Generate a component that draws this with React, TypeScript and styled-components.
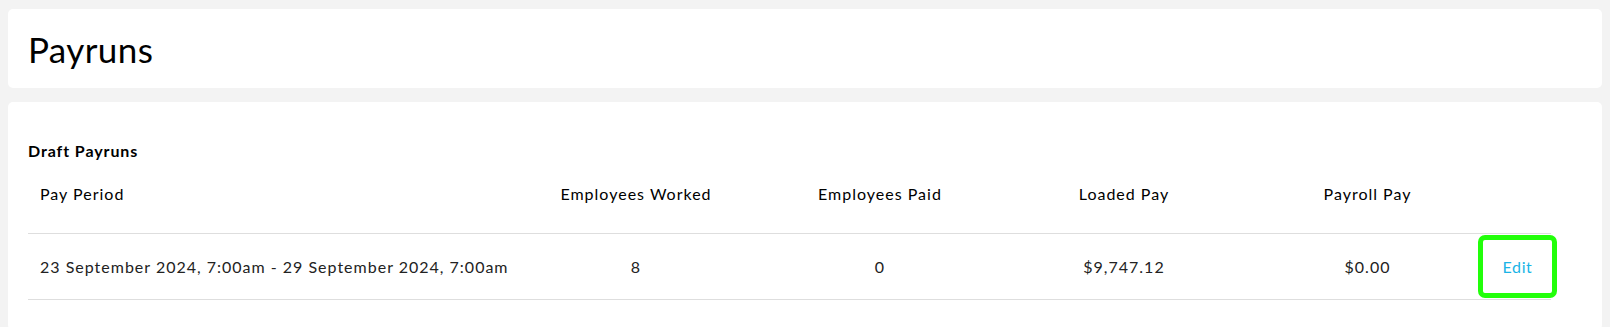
import React from 'react';
import styled, { createGlobalStyle } from 'styled-components';

const GlobalStyle = createGlobalStyle`
  html, body {
    margin: 0;
    padding: 0;
    background: #f3f3f3;
  }
  body {
    padding: 9px 8px 0 8px;
    font-family: Lato, "Open Sans", "Liberation Sans", sans-serif;
    color: #111;
  }
`;

const Page = styled.div`
  display: flex;
  flex-direction: column;
  gap: 14px;
`;

const Card = styled.section<{ $padTop?: number }>`
  background: #fff;
  border-radius: 5px;
  padding: ${(p) => p.$padTop ?? 0}px 51px 0 20px;
`;

const HeaderCard = styled(Card)`
  height: 79px;
  display: flex;
  align-items: center;
`;

const Title = styled.h1`
  margin: 0;
  font-size: 35px;
  font-weight: 400;
  color: #000;
  letter-spacing: 0.4px;
`;

const SectionTitle = styled.h2`
  margin: 0;
  font-size: 16px;
  line-height: 20px;
  font-weight: 700;
  color: #000;
  letter-spacing: 0.9px;
`;

const Table = styled.div`
  width: 1523px;
  padding-bottom: 30px;
`;

const Row = styled.div<{ $head?: boolean }>`
  display: grid;
  grid-template-columns: 486px 244px 244px 244px 243px 1fr;
  align-items: center;
  height: ${(p) => (p.$head ? 72 : 65)}px;
  border-bottom: 1px solid #dedede;
  font-size: 16px;
  letter-spacing: 1px;
  color: ${(p) => (p.$head ? '#000' : '#222')};
`;

const Cell = styled.div<{ $left?: boolean }>`
  padding: 0 12px;
  text-align: ${(p) => (p.$left ? 'left' : 'center')};
  white-space: nowrap;
`;

const HeadCell = styled(Cell)`
  padding-bottom: 7px;
`;

const EditCell = styled.div`
  display: flex;
  justify-content: flex-start;
`;

const EditLink = styled.a`
  display: flex;
  align-items: center;
  justify-content: center;
  width: 69px;
  height: 53px;
  margin-left: -6px;
  color: #1ab4e6;
  font-size: 16px;
  letter-spacing: 0.6px;
  text-decoration: none;
  cursor: pointer;
  outline: 5px solid #22ff0a;
  border-radius: 2px;
`;

const rows = [
  {
    period: '23 September 2024, 7:00am - 29 September 2024, 7:00am',
    worked: '8',
    paid: '0',
    loaded: '$9,747.12',
    payroll: '$0.00',
  },
];

export default function App() {
  return (
    <>
      <GlobalStyle />
      <Page>
        <HeaderCard>
          <Title>Payruns</Title>
        </HeaderCard>
        <Card $padTop={39}>
          <SectionTitle>Draft Payruns</SectionTitle>
          <Table>
            <Row $head>
              <HeadCell $left>Pay Period</HeadCell>
              <HeadCell>Employees Worked</HeadCell>
              <HeadCell>Employees Paid</HeadCell>
              <HeadCell>Loaded Pay</HeadCell>
              <HeadCell>Payroll Pay</HeadCell>
              <HeadCell />
            </Row>
            {rows.map((r) => (
              <Row key={r.period}>
                <Cell $left>{r.period}</Cell>
                <Cell>{r.worked}</Cell>
                <Cell>{r.paid}</Cell>
                <Cell>{r.loaded}</Cell>
                <Cell>{r.payroll}</Cell>
                <EditCell>
                  <EditLink>Edit</EditLink>
                </EditCell>
              </Row>
            ))}
          </Table>
        </Card>
      </Page>
    </>
  );
}
